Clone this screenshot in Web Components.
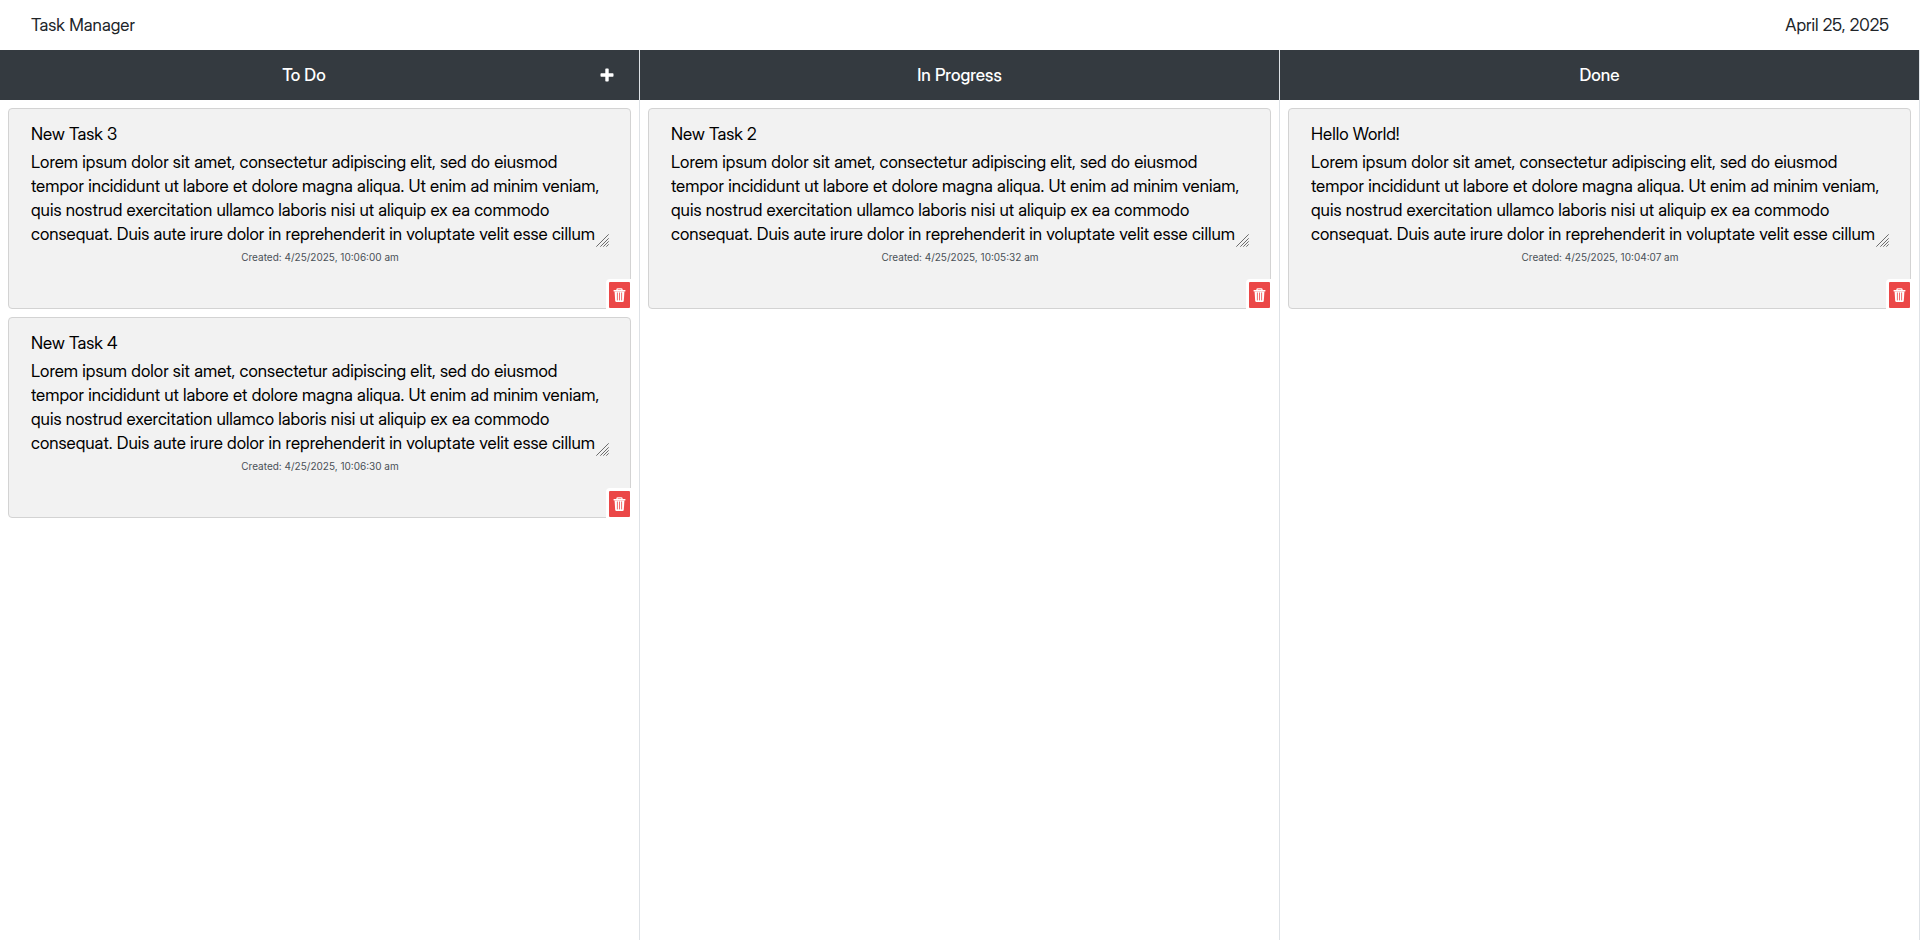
<!DOCTYPE html>
<html lang="en">
<head>
<meta charset="utf-8">
<meta name="viewport" content="width=device-width, initial-scale=1">
<title>Task Manager</title>
<style>
  html, body { height: 100%; margin: 0; }
  body { background: #fff; color: #212529; font: 17px/24px "Inter Display", Inter, "Liberation Sans", sans-serif; }
</style>
</head>
<body>
<task-app>
  <task-header slot="header">
    <span slot="title">Task Manager</span>
    <time slot="date" datetime="2025-04-25">April 25, 2025</time>
  </task-header>
  <task-column heading="To Do" can-add>
    <task-card heading="New Task 3" created="4/25/2025, 10:06:00 am"></task-card>
    <task-card heading="New Task 4" created="4/25/2025, 10:06:30 am"></task-card>
  </task-column>
  <task-column heading="In Progress">
    <task-card heading="New Task 2" created="4/25/2025, 10:05:32 am"></task-card>
  </task-column>
  <task-column heading="Done">
    <task-card heading="Hello World!" created="4/25/2025, 10:04:07 am"></task-card>
  </task-column>
</task-app>

<template id="app">
  <style>
    :host { display: flex; flex-direction: column; min-height: 100%; }
    main { flex: 1; display: grid; grid-template-columns: repeat(3, minmax(0, 1fr)); }
  </style>
  <slot name="header"></slot>
  <main><slot></slot></main>
</template>

<template id="header">
  <style>
    :host { display: block; }
    header { display: flex; justify-content: space-between; align-items: center; height: 50px; padding: 0 31px; }
  </style>
  <header><slot name="title"></slot><slot name="date"></slot></header>
</template>

<template id="column">
  <style>
    :host { display: block; border-right: 1px solid #dee2e6; }
    header { display: flex; align-items: center; height: 50px; padding: 0 8px; background: #343a40; color: #fff; }
    h2 { flex: 1; margin: 0; text-align: center; font: inherit; font-weight: 500; }
    button { display: flex; width: 31px; padding: 8px 0; border: 0; background: none; color: inherit; cursor: pointer; }
    button[hidden] { display: none; }
    .cards { display: flex; flex-direction: column; gap: 8px; padding: 8px; }
  </style>
  <section>
    <header>
      <h2></h2>
      <button type="button" aria-label="Add task" hidden>
        <svg width="14" height="14" viewBox="0 0 14 14" fill="currentColor" aria-hidden="true"><path d="M5.3 1.2q0-.7.7-.7h2q.7 0 .7.7v4.1h4.1q.7 0 .7.7v2q0 .7-.7.7H8.7v4.1q0 .7-.7.7H6q-.7 0-.7-.7V8.7H1.2q-.7 0-.7-.7V6q0-.7.7-.7h4.1z"/></svg>
      </button>
    </header>
    <div class="cards"><slot></slot></div>
  </section>
</template>

<template id="card">
  <style>
    :host { display: block; }
    article { position: relative; box-sizing: border-box; min-height: 201px; padding: 13px 21px 13px 22px; border: 1px solid #d3d3d3; border-radius: 4px; background: #f2f2f2; }
    input, textarea { display: block; box-sizing: border-box; width: 100%; margin: 0; padding: 0; border: 0; outline: 0; background: transparent; color: #000; font: inherit; }
    input { height: 24px; margin-bottom: 4px; }
    .body { position: relative; }
    textarea { height: 97px; padding-right: 4px; resize: none; overflow: hidden; }
    .grip { position: absolute; right: 0; bottom: 0; }
    p { margin: 0; text-align: center; color: #495057; font-family: Inter, "Liberation Sans", sans-serif; font-size: 10px; line-height: 20px; }
    button { position: absolute; right: -1px; bottom: -1px; display: flex; box-sizing: content-box; padding: 0; border: solid #fff; border-width: 3px 1px 1px 3px; border-radius: 4px 0 0 0; background: #fff; color: #fff; cursor: pointer; }
    .bin { display: flex; align-items: center; justify-content: center; width: 21px; height: 26px; border-radius: 1px; background: #eb4747; }
  </style>
  <article>
    <input type="text" aria-label="Task title">
    <div class="body">
      <textarea aria-label="Task description" spellcheck="false"></textarea>
      <svg class="grip" width="13" height="13" viewBox="0 0 13 13" fill="none" stroke="#6c6c6c" aria-hidden="true"><path d="M.3 12.7 12.7.3M4.3 12.7l8.4-8.4M7.3 12.7l5.4-5.4M10.3 12.7l2.4-2.4"/></svg>
    </div>
    <p></p>
    <button type="button" aria-label="Delete task">
      <span class="bin"><svg width="13" height="14" viewBox="0 0 13 14" aria-hidden="true"><path fill="none" stroke="#fff" stroke-width="1.3" d="M4 2.7V1.6q0-.8.8-.8h3.4q.8 0 .8.8v1.1"/><rect x=".5" y="2" width="12" height="1.5" rx=".4" fill="#fff"/><path fill="#fff" d="M1.6 3.5h9.8l-.6 9.3q-.1 1.2-1.2 1.2H3.4q-1.1 0-1.2-1.2z"/><path stroke="#eb4747" stroke-width=".8" stroke-linecap="round" d="M4.4 4.9v7.1M6.5 4.9v7.1M8.6 4.9v7.1"/></svg></span>
    </button>
  </article>
</template>

<script>
  const DESCRIPTION = "Lorem ipsum dolor sit amet, consectetur adipiscing elit, sed do eiusmod tempor incididunt ut labore et dolore magna aliqua. Ut enim ad minim veniam, quis nostrud exercitation ullamco laboris nisi ut aliquip ex ea commodo consequat. Duis aute irure dolor in reprehenderit in voluptate velit esse cillum";

  class TemplateElement extends HTMLElement {
    render(id) {
      const root = this.attachShadow({ mode: "open" });
      root.append(document.getElementById(id).content.cloneNode(true));
      return root;
    }
  }

  customElements.define("task-app", class extends TemplateElement {
    constructor() { super(); this.render("app"); }
  });

  customElements.define("task-header", class extends TemplateElement {
    constructor() { super(); this.render("header"); }
  });

  customElements.define("task-card", class extends TemplateElement {
    constructor() { super(); this.render("card"); }
    connectedCallback() {
      const root = this.shadowRoot;
      root.querySelector("input").value = this.getAttribute("heading");
      root.querySelector("textarea").value = this.getAttribute("description") || DESCRIPTION;
      root.querySelector("p").textContent = "Created: " + this.getAttribute("created");
      root.querySelector("button").onclick = () => this.remove();
    }
  });

  customElements.define("task-column", class extends TemplateElement {
    constructor() { super(); this.render("column"); }
    connectedCallback() {
      const root = this.shadowRoot;
      root.querySelector("h2").textContent = this.getAttribute("heading");
      const add = root.querySelector("button");
      add.hidden = !this.hasAttribute("can-add");
      add.onclick = () => {
        const card = document.createElement("task-card");
        card.setAttribute("heading", "New Task");
        card.setAttribute("created", new Date().toLocaleString("en-US"));
        this.append(card);
      };
    }
  });
</script>
</body>
</html>
